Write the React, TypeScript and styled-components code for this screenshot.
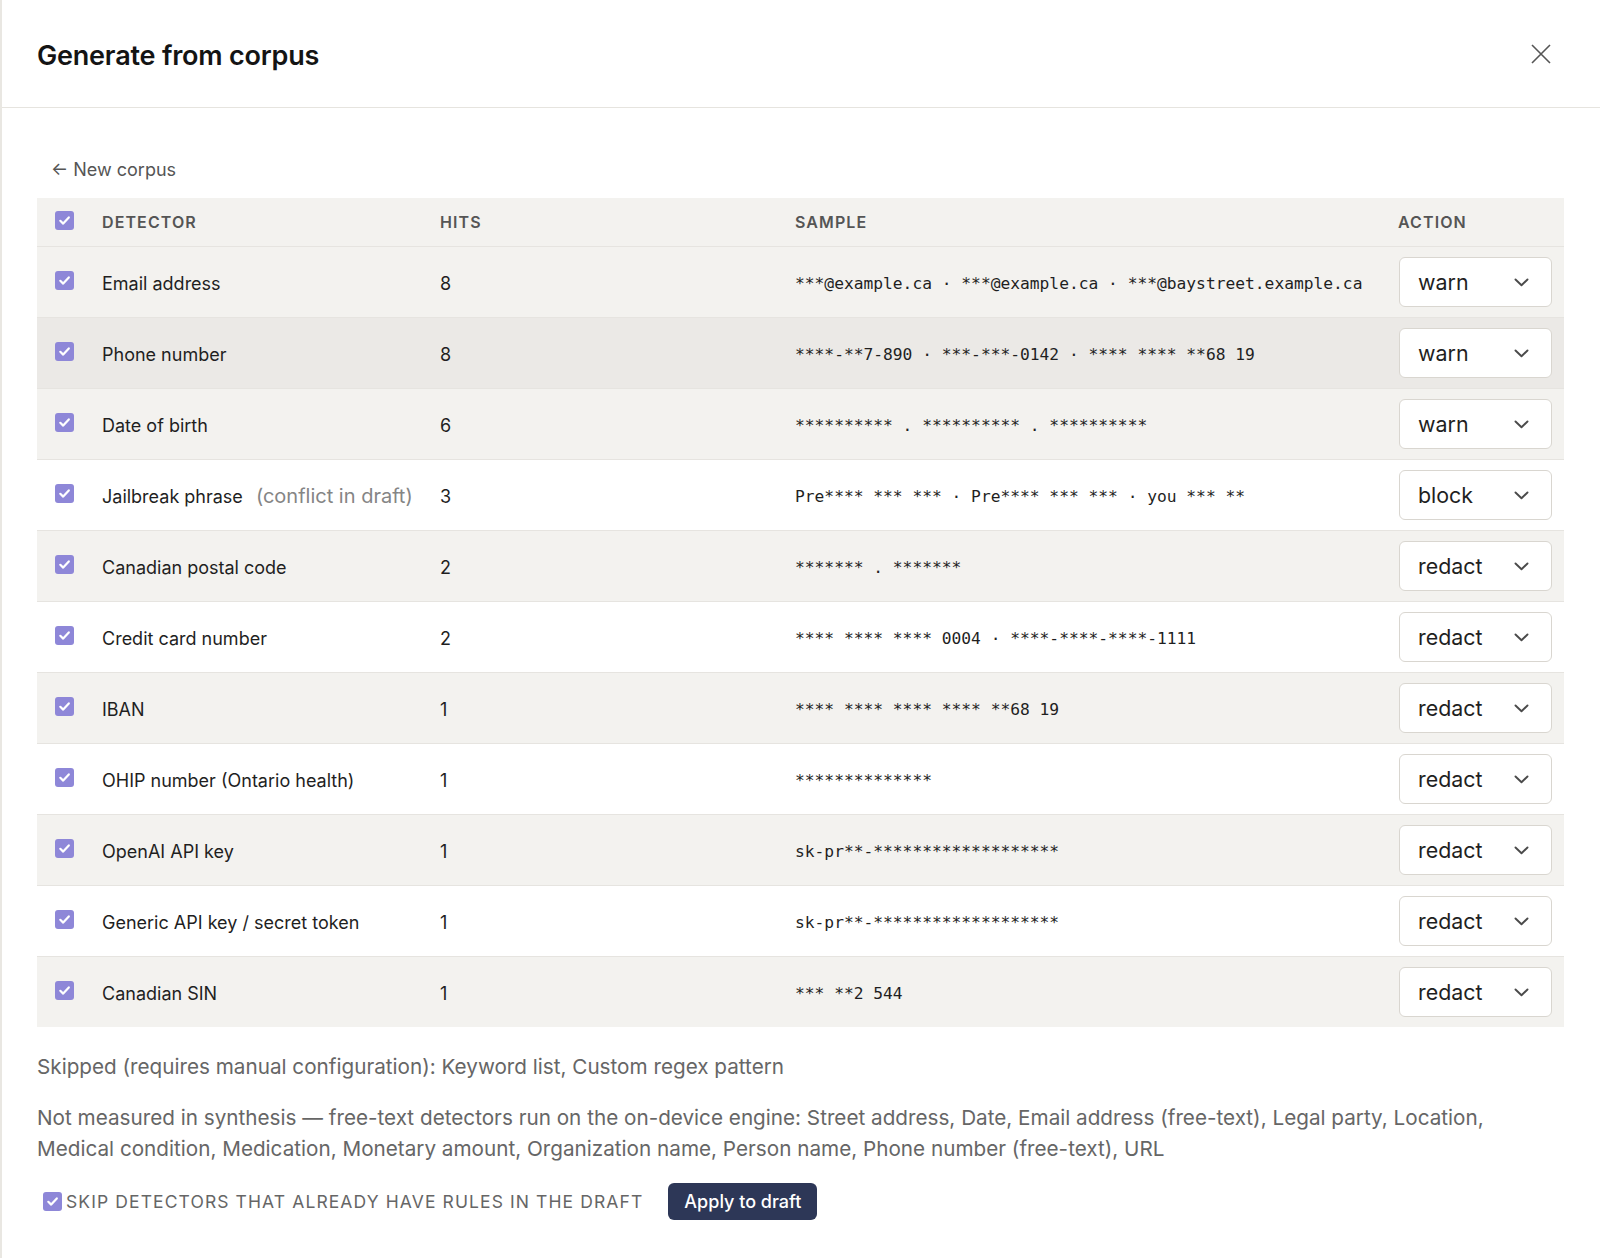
import React from "react";
import styled, { createGlobalStyle } from "styled-components";

const GlobalStyle = createGlobalStyle`
  html, body {
    margin: 0;
    padding: 0;
    background: #ffffff;
  }
  body {
    font-family: Inter, "Noto Sans", "Liberation Sans", sans-serif;
    color: #1f1f1f;
  }
`;

type Action = "warn" | "block" | "redact";

interface DetectorRow {
  name: string;
  note?: string;
  hits: number;
  sample: string;
  action: Action;
}

const rows: DetectorRow[] = [
  {
    name: "Email address",
    hits: 8,
    sample: "***@example.ca · ***@example.ca · ***@baystreet.example.ca",
    action: "warn",
  },
  {
    name: "Phone number",
    hits: 8,
    sample: "****-**7-890 · ***-***-0142 · **** **** **68 19",
    action: "warn",
  },
  {
    name: "Date of birth",
    hits: 6,
    sample: "********** . ********** . **********",
    action: "warn",
  },
  {
    name: "Jailbreak phrase",
    note: "(conflict in draft)",
    hits: 3,
    sample: "Pre**** *** *** · Pre**** *** *** · you *** **",
    action: "block",
  },
  { name: "Canadian postal code", hits: 2, sample: "******* . *******", action: "redact" },
  {
    name: "Credit card number",
    hits: 2,
    sample: "**** **** **** 0004 · ****-****-****-1111",
    action: "redact",
  },
  { name: "IBAN", hits: 1, sample: "**** **** **** **** **68 19", action: "redact" },
  { name: "OHIP number (Ontario health)", hits: 1, sample: "**************", action: "redact" },
  { name: "OpenAI API key", hits: 1, sample: "sk-pr**-*******************", action: "redact" },
  {
    name: "Generic API key / secret token",
    hits: 1,
    sample: "sk-pr**-*******************",
    action: "redact",
  },
  { name: "Canadian SIN", hits: 1, sample: "*** **2 544", action: "redact" },
];

const Panel = styled.div`
  min-height: 1258px;
  border-left: 2px solid #e9e7e2;
  box-sizing: border-box;
  background: #ffffff;
`;

const Header = styled.header`
  height: 108px;
  box-sizing: border-box;
  display: flex;
  align-items: center;
  justify-content: space-between;
  padding: 4px 48px 0 35px;
  border-bottom: 1px solid #e6e4df;
`;

const Title = styled.h1`
  margin: 0;
  font-size: 27px;
  font-weight: 600;
  letter-spacing: -0.2px;
  color: #141414;
`;

const CloseButton = styled.button`
  border: none;
  background: none;
  padding: 0;
  margin-top: -4px;
  width: 22px;
  height: 22px;
  display: flex;
  align-items: center;
  justify-content: center;
  cursor: pointer;
  color: #555555;
`;

const Body = styled.div`
  padding: 50px 36px 0 35px;
`;

const BackLink = styled.a`
  display: inline-block;
  margin-left: 14px;
  font-size: 18px;
  color: #555555;
  text-decoration: none;
  line-height: 24px;
  margin-bottom: 16px;
`;

const Table = styled.div`
  display: flex;
  flex-direction: column;
`;

const columns = "65px 338px 355px 603px 1fr";

const HeaderRow = styled.div`
  display: grid;
  grid-template-columns: ${columns};
  align-items: center;
  height: 48px;
  background: #f3f2ef;
`;

const HeadCell = styled.div`
  font-size: 16px;
  font-weight: 600;
  letter-spacing: 1.1px;
  text-transform: uppercase;
  color: #555555;
`;

const Row = styled.div<{ $tone: "gray" | "white" | "hover" }>`
  display: grid;
  grid-template-columns: ${columns};
  align-items: center;
  height: 71px;
  box-sizing: border-box;
  border-top: 1px solid #e6e4e0;
  background: ${({ $tone }) =>
    $tone === "hover" ? "#ebe9e6" : $tone === "gray" ? "#f3f2ef" : "#ffffff"};
`;

const CheckCell = styled.div`
  padding-left: 18px;
  display: flex;
  align-items: center;
  margin-top: -4px;
`;

const Box = styled.span`
  width: 19px;
  height: 19px;
  border-radius: 3px;
  background: #8e87d8;
  display: inline-flex;
  align-items: center;
  justify-content: center;
  flex-shrink: 0;
`;

const NameCell = styled.div`
  font-size: 18px;
  color: #1f1f1f;
  display: flex;
  align-items: baseline;
  white-space: nowrap;
  padding-top: 2px;
`;

const Note = styled.span`
  margin-left: 13px;
  font-size: 20px;
  color: #858585;
`;

const HitsCell = styled.div`
  font-size: 18px;
  color: #1f1f1f;
  padding-top: 2px;
`;

const SampleCell = styled.div`
  font-family: "DejaVu Sans Mono", "Liberation Mono", monospace;
  font-size: 16.25px;
  color: #1f1f1f;
  white-space: nowrap;
  padding-top: 2px;
`;

const ActionCell = styled.div`
  padding-right: 12px;
  display: flex;
  justify-content: flex-end;
`;

const Select = styled.div`
  width: 153px;
  height: 50px;
  box-sizing: border-box;
  border: 1px solid #d9d6d0;
  border-radius: 6px;
  background: #ffffff;
  display: flex;
  align-items: center;
  justify-content: space-between;
  padding: 0 22px 0 18px;
  font-size: 21.4px;
  color: #1f1f1f;
`;

const Notes = styled.div`
  margin-top: 24px;
  display: flex;
  flex-direction: column;
  gap: 20px;
`;

const Paragraph = styled.p`
  margin: 0;
  font-size: 20.7px;
  line-height: 31px;
  color: #666666;
`;

const FooterBar = styled.div`
  margin-top: 19px;
  display: flex;
  align-items: center;
  gap: 25px;
`;

const SkipLabel = styled.label`
  display: flex;
  align-items: center;
  gap: 4px;
  margin-left: 6px;
  font-size: 17.5px;
  letter-spacing: 1.1px;
  text-transform: uppercase;
  color: #666666;
`;

const PrimaryButton = styled.button`
  height: 37px;
  padding: 0 16px;
  border: none;
  border-radius: 6px;
  background: #2d3757;
  color: #ffffff;
  font-family: inherit;
  font-size: 18px;
  font-weight: 500;
  cursor: pointer;
`;

const Check = () => (
  <Box>
    <svg width="13" height="13" viewBox="0 0 13 13" fill="none">
      <path
        d="M2.3 6.8 L5.2 9.6 L10.8 3.4"
        stroke="#ffffff"
        strokeWidth="2.2"
        strokeLinecap="round"
        strokeLinejoin="round"
      />
    </svg>
  </Box>
);

const Chevron = () => (
  <svg width="15" height="9" viewBox="0 0 15 9" fill="none">
    <path
      d="M1.5 1.5 L7.5 7.2 L13.5 1.5"
      stroke="#4a4a4a"
      strokeWidth="1.9"
      strokeLinecap="round"
      strokeLinejoin="round"
    />
  </svg>
);

const App = () => {
  return (
    <>
      <GlobalStyle />
      <Panel>
        <Header>
          <Title>Generate from corpus</Title>
          <CloseButton aria-label="Close">
            <svg width="20" height="20" viewBox="0 0 20 20" fill="none">
              <path d="M1 1 L19 19 M19 1 L1 19" stroke="#555555" strokeWidth="1.6" />
            </svg>
          </CloseButton>
        </Header>
        <Body>
          <BackLink href="#">← New corpus</BackLink>
          <Table>
            <HeaderRow>
              <CheckCell>
                <Check />
              </CheckCell>
              <HeadCell>Detector</HeadCell>
              <HeadCell>Hits</HeadCell>
              <HeadCell>Sample</HeadCell>
              <HeadCell>Action</HeadCell>
            </HeaderRow>
            {rows.map((row, i) => (
              <Row key={row.name} $tone={i === 1 ? "hover" : i % 2 === 0 ? "gray" : "white"}>
                <CheckCell>
                  <Check />
                </CheckCell>
                <NameCell>
                  {row.name}
                  {row.note && <Note>{row.note}</Note>}
                </NameCell>
                <HitsCell>{row.hits}</HitsCell>
                <SampleCell>{row.sample}</SampleCell>
                <ActionCell>
                  <Select>
                    <span>{row.action}</span>
                    <Chevron />
                  </Select>
                </ActionCell>
              </Row>
            ))}
          </Table>
          <Notes>
            <Paragraph>
              Skipped (requires manual configuration): Keyword list, Custom regex pattern
            </Paragraph>
            <Paragraph>
              Not measured in synthesis — free-text detectors run on the on-device engine: Street
              address, Date, Email address (free-text), Legal party, Location, Medical condition,
              Medication, Monetary amount, Organization name, Person name, Phone number
              (free-text), URL
            </Paragraph>
          </Notes>
          <FooterBar>
            <SkipLabel>
              <Check />
              Skip detectors that already have rules in the draft
            </SkipLabel>
            <PrimaryButton>Apply to draft</PrimaryButton>
          </FooterBar>
        </Body>
      </Panel>
    </>
  );
};

export default App;
